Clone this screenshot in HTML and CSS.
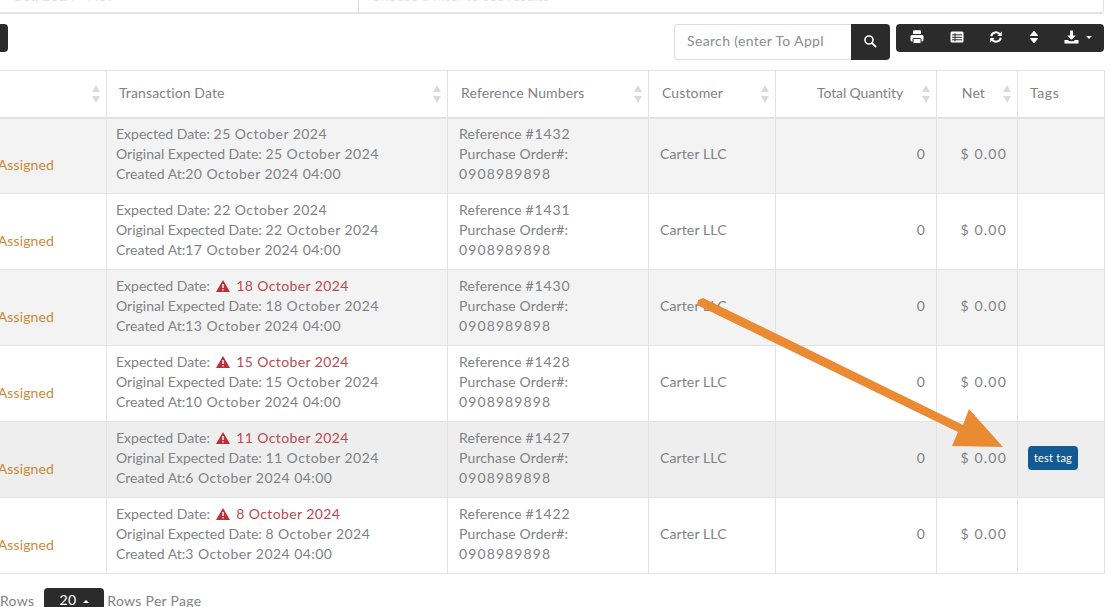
FILE: index.html
```html
<!DOCTYPE html>
<html lang="en">
<head>
<meta charset="utf-8">
<title>Transactions</title>
<link rel="stylesheet" href="styles.css">
</head>
<body>
<div class="page">
  <div class="filters">
    <div class="filter filter-a"><span class="ghost">Oct, 2024 - Nov</span></div>
    <div class="filter filter-b"><span class="ghost">Choose a filter to see results</span></div>
  </div>
  <div class="toolbar">
    <div class="stub"></div>
    <div class="tools">
      <div class="search">
        <div class="search-input"><span>Search (enter To Appl</span></div>
        <button class="search-btn"><svg width="14" height="14" viewBox="0 0 14 14"><circle cx="6" cy="6" r="4" fill="none" stroke="#fff" stroke-width="1.6"/><path d="M9 9l3.600 3.600" stroke="#fff" stroke-width="1.800" stroke-linecap="round"/></svg></button>
      </div>
      <div class="actions">
        <svg width="14" height="14" viewBox="0 0 14 14"><path fill="#fff" d="M3 1.200a1 1 0 0 1 1-1h6a1 1 0 0 1 1 1V4H3z"/><rect x=".5" y="5" width="13" height="6.500" rx="1.500" fill="#fff"/><rect x="3" y="8.500" width="8" height="5" rx=".5" fill="#fff" stroke="#2b2b2b"/></svg>
        <svg width="14" height="14" viewBox="0 0 14 14"><rect x=".5" y="1.500" width="13" height="11" rx="1.500" fill="#fff"/><path stroke="#2b2b2b" stroke-width="1" d="M2 4.800h10M2 7.300h10M2 9.800h10M5 3.300v8"/></svg>
        <svg width="14" height="14" viewBox="0 0 14 14"><path fill="none" stroke="#fff" stroke-width="2" d="M2.200 6.200A4.800 4.800 0 0 1 11 4.600M11.800 7.800A4.800 4.800 0 0 1 3 9.400"/><path fill="#fff" d="M12.800 1.500V6H8.300zM1.200 12.500V8h4.500z"/></svg>
        <svg width="10" height="14" viewBox="0 0 10 14"><path fill="#fff" stroke="#fff" stroke-linejoin="round" d="M5 1.200l3.600 4.300H1.400zM5 12.800L1.400 8.500h7.200z"/></svg>
        <span class="download">
          <svg width="15" height="14" viewBox="0 0 15 14"><path fill="#fff" d="M6 .5h3v5h2.800L7.500 9.800 3.200 5.500H6zM.5 10h3.500l1.500 1.300h4L11 10h3.500v3.500H.5z"/></svg>
          <i class="caret"></i>
        </span>
      </div>
    </div>
  </div>
  <table class="grid">
    <colgroup><col class="c1"><col class="c2"><col class="c3"><col class="c4"><col class="c5"><col class="c6"><col class="c7"></colgroup>
    <thead>
      <tr>
        <th><i class="sort"></i></th>
        <th>Transaction Date<i class="sort"></i></th>
        <th class="pad">Reference Numbers<i class="sort"></i></th>
        <th class="pad">Customer<i class="sort"></i></th>
        <th class="num qty">Total Quantity<i class="sort"></i></th>
        <th class="num net">Net<i class="sort"></i></th>
        <th class="tags">Tags</th>
      </tr>
    </thead>
    <tbody>
      <tr>
        <td class="status"><span>Assigned</span></td>
        <td class="dates">Expected Date: <span class="d">25 October 2024</span><br>Original Expected Date: <span class="d">25 October 2024</span><br>Created At:<span class="d">20 October 2024 04:00</span></td>
        <td class="refs">Reference <span class="rn">#1432</span><br>Purchase Order#:<br><span class="tel">0908989898</span></td>
        <td class="refs">Carter LLC</td><td class="num">0</td><td class="num"><span class="money">$ 0.00</span></td><td></td>
      </tr>
      <tr>
        <td class="status"><span>Assigned</span></td>
        <td class="dates">Expected Date: <span class="d">22 October 2024</span><br>Original Expected Date: <span class="d">22 October 2024</span><br>Created At:<span class="d">17 October 2024 04:00</span></td>
        <td class="refs">Reference <span class="rn">#1431</span><br>Purchase Order#:<br><span class="tel">0908989898</span></td>
        <td class="refs">Carter LLC</td><td class="num">0</td><td class="num"><span class="money">$ 0.00</span></td><td></td>
      </tr>
      <tr>
        <td class="status"><span>Assigned</span></td>
        <td class="dates">Expected Date: <span class="late"><svg class="warn" width="14" height="12" viewBox="0 0 14 12"><path fill="#b8323c" d="M7 0l7 12H0z"/><path stroke="#fff" stroke-width="1.400" d="M7 4v4M7 9.200v1.300"/></svg> <span class="ld">18 October 2024</span></span><br>Original Expected Date: <span class="d">18 October 2024</span><br>Created At:<span class="d">13 October 2024 04:00</span></td>
        <td class="refs">Reference <span class="rn">#1430</span><br>Purchase Order#:<br><span class="tel">0908989898</span></td>
        <td class="refs">Carter LLC</td><td class="num">0</td><td class="num"><span class="money">$ 0.00</span></td><td></td>
      </tr>
      <tr>
        <td class="status"><span>Assigned</span></td>
        <td class="dates">Expected Date: <span class="late"><svg class="warn" width="14" height="12" viewBox="0 0 14 12"><path fill="#b8323c" d="M7 0l7 12H0z"/><path stroke="#fff" stroke-width="1.400" d="M7 4v4M7 9.200v1.300"/></svg> <span class="ld">15 October 2024</span></span><br>Original Expected Date: <span class="d">15 October 2024</span><br>Created At:<span class="d">10 October 2024 04:00</span></td>
        <td class="refs">Reference <span class="rn">#1428</span><br>Purchase Order#:<br><span class="tel">0908989898</span></td>
        <td class="refs">Carter LLC</td><td class="num">0</td><td class="num"><span class="money">$ 0.00</span></td><td></td>
      </tr>
      <tr class="hover">
        <td class="status"><span>Assigned</span></td>
        <td class="dates">Expected Date: <span class="late"><svg class="warn" width="14" height="12" viewBox="0 0 14 12"><path fill="#b8323c" d="M7 0l7 12H0z"/><path stroke="#fff" stroke-width="1.400" d="M7 4v4M7 9.200v1.300"/></svg> <span class="ld">11 October 2024</span></span><br>Original Expected Date: <span class="d">11 October 2024</span><br>Created At:<span class="d">6 October 2024 04:00</span></td>
        <td class="refs">Reference <span class="rn">#1427</span><br>Purchase Order#:<br><span class="tel">0908989898</span></td>
        <td class="refs">Carter LLC</td><td class="num">0</td><td class="num"><span class="money">$ 0.00</span></td><td class="tagcell"><span class="tag">test tag</span></td>
      </tr>
      <tr>
        <td class="status"><span>Assigned</span></td>
        <td class="dates">Expected Date: <span class="late"><svg class="warn" width="14" height="12" viewBox="0 0 14 12"><path fill="#b8323c" d="M7 0l7 12H0z"/><path stroke="#fff" stroke-width="1.400" d="M7 4v4M7 9.200v1.300"/></svg> <span class="ld">8 October 2024</span></span><br>Original Expected Date: <span class="d">8 October 2024</span><br>Created At:<span class="d">3 October 2024 04:00</span></td>
        <td class="refs">Reference <span class="rn">#1422</span><br>Purchase Order#:<br><span class="tel">0908989898</span></td>
        <td class="refs">Carter LLC</td><td class="num">0</td><td class="num"><span class="money">$ 0.00</span></td><td></td>
      </tr>
    </tbody>
  </table>
  <div class="pager">
    <span>Rows</span>
    <span class="size">20 <i class="up"></i></span>
    <span class="perpage">Rows Per Page</span>
  </div>
  <svg class="arrow" width="320" height="160" viewBox="0 0 320 160"><path fill="#ea8b33" d="M1 2L6 0 L266 127 L272 111 L306 149 L255 148 L261 134 L0 7z"/></svg>
</div>
</body>
</html>
```
FILE: styles.css
```css
* { box-sizing: border-box; }
html, body { margin: 0; padding: 0; height: 100%; overflow: hidden; background: #fff; }
.page {
  position: relative;
  width: 1120px;
  height: 607px;
  overflow: hidden;
  font-family: Lato, "Open Sans", sans-serif;
  color: #808284;
  font-size: 14px;
  letter-spacing: .12px;
}
.filters {
  display: flex;
  width: 1104px;
  height: 14px;
  border-bottom: 2px solid #e3e3e3;
  border-right: 1px solid #e3e3e3;
  border-bottom-right-radius: 3px;
}
.filter { overflow: hidden; height: 12px; }
.filter-a { width: 359px; border-right: 1px solid #dcdcdc; }
.filter-b { flex: 1; }
.ghost { display: block; margin-top: -13px; padding-left: 12px; color: #e2e2e2; }
.toolbar { display: flex; justify-content: space-between; width: 1104px; padding-top: 10px; height: 56px; }
.stub { width: 8px; height: 28px; background: #2b2b2b; border-radius: 0 4px 4px 0; }
.tools { display: flex; gap: 6px; align-items: flex-start; }
.search { display: flex; height: 36px; }
.search-input {
  width: 177px;
  border: 1px solid #dcdcdc;
  border-right: 0;
  border-radius: 4px 0 0 4px;
  padding: 0 12px;
  line-height: 32px;
  overflow: hidden;
  white-space: nowrap;
  letter-spacing: .35px;
  color: #8b8d8f;
}
.search-input span { display: block; width: 138px; overflow: hidden; }
.search-btn {
  width: 39px;
  border: 0;
  padding: 0 2px 3px 0;
  background: #2b2b2b;
  border-radius: 0 4px 4px 0;
  display: flex;
  align-items: center;
  justify-content: center;
}
.actions {
  width: 208px;
  height: 28px;
  background: #2b2b2b;
  border-radius: 4px;
  display: flex;
  align-items: center;
  gap: 25.5px;
  padding: 0 0 2px 14px;
}
.download { display: flex; align-items: center; gap: 7px; }
.caret { width: 0; height: 0; border: 3px solid transparent; border-top-color: #fff; border-bottom: 0; }
.grid {
  table-layout: fixed;
  border-collapse: collapse;
  width: 1204px;
  margin-left: -100px;
}
.c1 { width: 206px; }
.c2 { width: 341px; }
.c3 { width: 201px; }
.c4 { width: 127px; }
.c5 { width: 161px; }
.c6 { width: 81px; }
.c7 { width: 87px; }
th, td { border: 1px solid #e3e3e3; vertical-align: middle; text-align: left; }
th {
  position: relative;
  height: 47px;
  font-weight: 400;
  padding: 0 12px 3px;
  border-bottom: 2px solid #e3e3e3;
  white-space: nowrap;
}
th.pad { padding-left: 13px; }
th.num { text-align: right; padding-right: 33px; }
th.qty { letter-spacing: -.1px; }
th.net { padding-right: 32px; }
th.tags { padding-left: 12px; letter-spacing: .6px; }
td { height: 76px; padding: 0 10px 4px; line-height: 20px; }
td.dates { padding-left: 9px; letter-spacing: 0; white-space: nowrap; }
td.refs { padding-left: 11px; letter-spacing: .12px; white-space: nowrap; }
td.num { text-align: right; padding-right: 11px; }
tbody tr:nth-child(odd) td { background: #f3f3f3; }
tbody tr.hover td { background: #eeeeee; }
td.status { text-align: right; padding: 0 52px 2px 10px; color: #c98a3a; }
.status span { display: block; padding-top: 20px; line-height: 20px; }
.d { letter-spacing: .45px; }
.ld { letter-spacing: .4px; margin-left: 2px; }
.rn { letter-spacing: .9px; }
.tel { letter-spacing: 1.1px; }
.money { letter-spacing: 1.2px; margin-right: -1px; }
.late { color: #bb4a52; }
.warn { vertical-align: -1px; margin: 0 1px 0 2px; }
.sort {
  position: absolute;
  right: 5px;
  top: 15px;
  width: 9px;
  height: 16px;
}
.sort::before, .sort::after {
  content: "";
  position: absolute;
  left: 0;
  border: 4.5px solid transparent;
}
.sort::before { top: -1px; border-bottom: 7px solid #d8dadc; border-top: 0; }
.sort::after { bottom: -1px; border-top: 7px solid #d8dadc; border-bottom: 0; }
td.tagcell { padding: 0 0 4px 10px; }
.tag {
  display: inline-block;
  background: #135a92;
  color: #fff;
  font-size: 11px;
  letter-spacing: .2px;
  line-height: 24px;
  height: 24px;
  width: 50px;
  text-align: center;
  border-radius: 4px;
  vertical-align: middle;
}
.pager { display: flex; align-items: flex-start; gap: 10px; padding-top: 18px; letter-spacing: .3px; }
.size {
  background: #2b2b2b;
  color: #fff;
  width: 60px;
  height: 30px;
  border-radius: 4px;
  text-align: center;
  line-height: 24px;
  margin-top: -4px;
}
.perpage { margin-left: -7px; }
.up { display: inline-block; width: 0; height: 0; border: 3px solid transparent; border-bottom-color: #fff; border-top: 0; vertical-align: 2px; margin-left: 3px; }
.arrow { position: absolute; left: 697px; top: 298px; pointer-events: none; }
```
